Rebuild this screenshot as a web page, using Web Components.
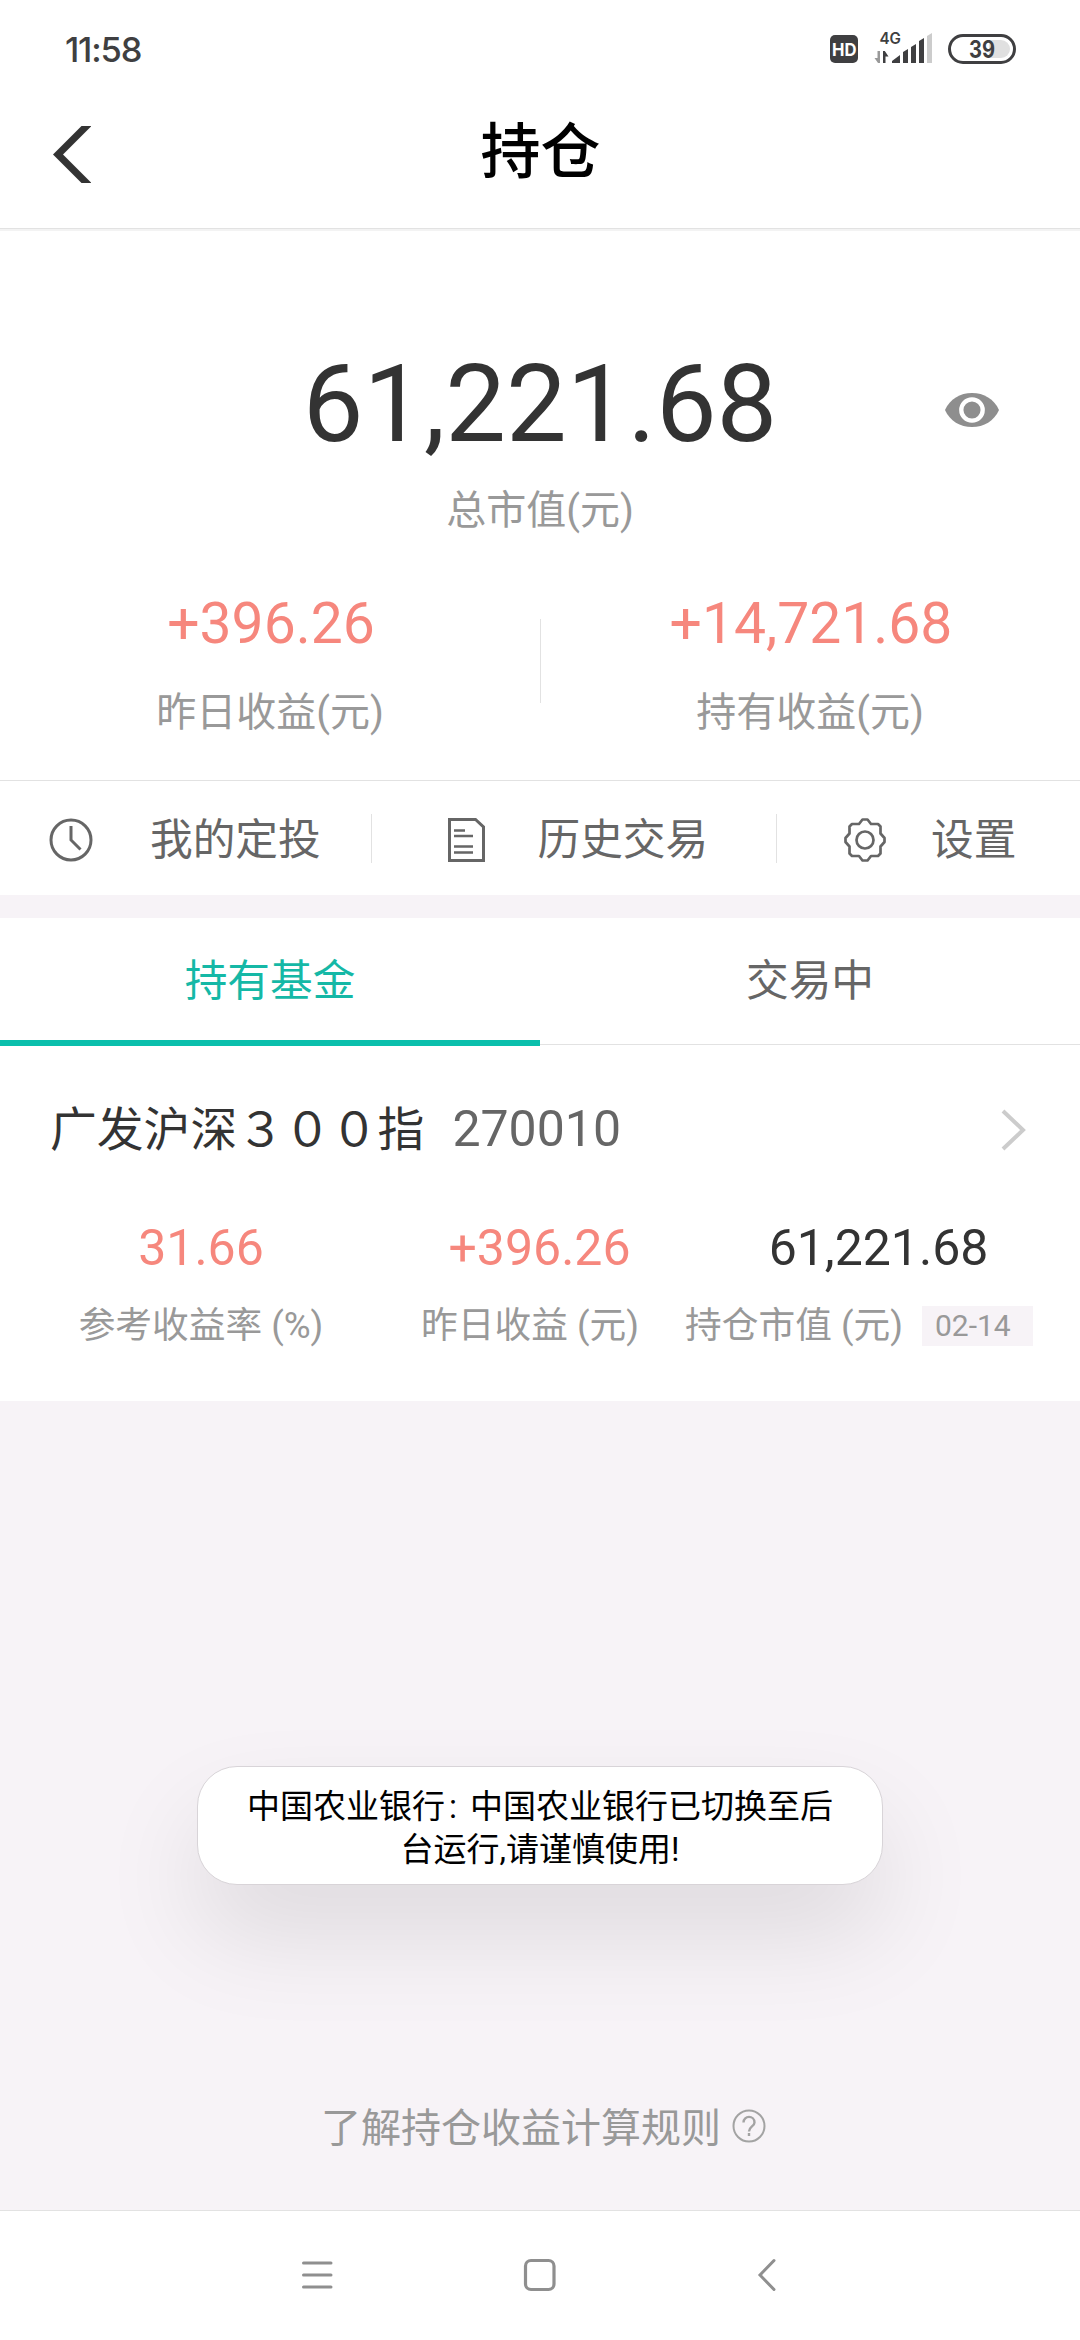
<!DOCTYPE html>
<html lang="zh-CN">
<head>
<meta charset="utf-8">
<title>持仓</title>
<style>
html,body{margin:0;padding:0}
body{width:1080px;height:2340px;overflow:hidden;background:#fff;font-family:Roboto,"Noto Sans CJK SC",sans-serif;color:#333}
</style>
</head>
<body>
<holdings-app></holdings-app>
<script>
const define = (name, css, html) => {
  const tpl = document.createElement('template');
  tpl.innerHTML = `<style>*{box-sizing:border-box}svg{display:block;flex:none}${css}</style>${html}`;
  customElements.define(name, class extends HTMLElement {
    constructor() {
      super();
      this.attachShadow({mode: 'open'}).append(tpl.content.cloneNode(true));
    }
  });
};

define('status-bar', `
:host{display:flex;height:90px;padding:0 64px 0 65px;justify-content:space-between;align-items:flex-start}
.time{font:500 34.5px/40px Inter,sans-serif;color:#3f3f41;margin-top:30px;letter-spacing:-1.2px}
.right{margin-top:30px}`,
`<div class="time">11:58</div>
<svg class="right" width="186" height="36" viewBox="830 30 186 36" font-family="Inter,sans-serif">
<rect x="830" y="35" width="28" height="28" rx="5" fill="#3f3f41"/>
<text x="832" y="55.8" font-size="18" font-weight="700" fill="#fff" textLength="24.5" lengthAdjust="spacingAndGlyphs">HD</text>
<text x="879.5" y="44" font-size="15.5" font-weight="600" fill="#3f3f41" textLength="21.5" lengthAdjust="spacingAndGlyphs">4G</text>
<path d="M880 51v12h-2l-3.500-5h3V51z" fill="#999"/>
<path d="M883 63V51h1.800l3.700 5.500h-3V63z" fill="#3f3f41"/>
<path d="M892 63v-2l8-6v8zM903 63V52l5-3v14zM911 63V47l5-3v19zM919 63V41l5-3v25z" fill="#3f3f41"/>
<path d="M927 63V36l5-3v30z" fill="#ccc"/>
<rect x="949.500" y="35.500" width="65" height="27" rx="13.500" fill="#fff" stroke="#3f3f41" stroke-width="3"/>
<path d="M989 40h12a9 9 0 0 1 0 18h-12z" fill="#e0e0e0"/>
<text x="969" y="57.800" font-size="24" font-weight="700" fill="#3f3f41" textLength="26" lengthAdjust="spacingAndGlyphs">39</text>
</svg>`);

define('title-bar', `
:host{display:flex;height:141px;padding:0 53px;align-items:flex-start;border-bottom:2px solid #f3f3f3;box-shadow:inset 0 -1px #e2e2e2}
svg{margin-top:36px}
h1{flex:1;margin:23px 37px 0 0;text-align:center;font:500 60px/80px Roboto,"Noto Sans CJK SC",sans-serif;color:#000}`,
`<svg width="38" height="57" viewBox="0 0 38 57"><path d="M28.500 0H38.500L10 28.500 38.500 57H28.500L0 28.500z" fill="#333"/></svg>
<h1><slot></slot></h1>`);

define('profit-cell', `
:host{display:block;width:540px;text-align:center}
.v{font-size:57px;line-height:66px;color:#f6877d;padding-left:2px}
.l{font-size:40px;line-height:48px;margin-top:32px;color:#999}`,
`<div class="v"><slot name="value"></slot></div><div class="l"><slot></slot></div>`);

define('market-summary', `
:host{display:flex;flex-direction:column;height:550px;padding-top:113px;border-bottom:1px solid #e2e2e2}
.total{display:grid;grid-template-columns:135px 1fr 135px;font-size:108px;line-height:120px;text-align:center}
.total b{grid-column:2;font-weight:400}
.total svg{margin-top:49px}
.cap{margin-top:23px;text-align:center;font-size:40px;line-height:48px;color:#999}
.row{display:flex;margin-top:56px}
.row i{width:1px;height:84px;margin:28px -1px 0 0;background:#e2e2e2}`,
`<div class="total"><b>61,221.68</b>
<svg width="54" height="34" viewBox="0 0 54 34"><path d="M0 17C5 6 15 0 27 0s22 6 27 17c-5 11-15 17-27 17S5 28 0 17z" fill="#8e8e8e"/><circle cx="27" cy="17" r="10.700" fill="none" stroke="#fff" stroke-width="4.300"/></svg></div>
<div class="cap">总市值(元)</div>
<div class="row"><profit-cell><span slot="value">+396.26</span>昨日收益(元)</profit-cell><i></i><profit-cell><span slot="value">+14,721.68</span>持有收益(元)</profit-cell></div>`);

define('quick-link', `
:host{display:flex;align-items:center;height:114px}
slot[name=icon]{display:flex}
::slotted(svg){margin-top:4px}
.t{font-size:42.7px;line-height:50px;color:#666;white-space:nowrap;margin-top:4px;margin-left:var(--gap)}`,
`<slot name="icon"></slot><div class="t"><slot></slot></div>`);

define('quick-links', `
:host{display:flex;align-items:center;height:114px}
i{width:1px;height:49px;background:#e2e2e2}
quick-link:nth-of-type(1){width:371px;padding-left:49px;--gap:57px}
quick-link:nth-of-type(2){width:404px;padding-left:76px;--gap:52.5px}
quick-link:nth-of-type(3){padding-left:66px;--gap:44px}`,
`<quick-link><svg slot="icon" width="44" height="44" viewBox="0 0 44 44" fill="none" stroke="#666" stroke-width="3"><circle cx="22" cy="22" r="20"/><path d="M22 8v14l9.500 9.500"/></svg>我的定投</quick-link><i></i>
<quick-link><svg slot="icon" width="37" height="44" viewBox="0 0 37 44" fill="none" stroke="#666" stroke-width="3"><path d="M1.500 1.500h26L35.500 9v33.500h-34z"/><path d="M6 12.500h11M6 18h19M6 28.500h19M6 34.500h19" stroke-width="2.600"/></svg>历史交易</quick-link><i></i>
<quick-link><svg slot="icon" width="44" height="44" viewBox="0 0 44 44" fill="none" stroke="#666" stroke-width="2.700" stroke-linejoin="round"><path d="M19.500 1.500h5L28 6h7l2.500 2.500v7l4 4.500v4l-4 4.500v7L35 38h-7l-3.500 4.500h-5L16 38H9l-2.500-2.500v-7l-4-4.500v-4l4-4.500v-7L9 6h7z"/><circle cx="22" cy="22" r="8.500"/></svg>设置</quick-link>`);

define('tab-item', `
:host{display:block;width:540px;height:127px;text-align:center;font-size:42.7px;line-height:126px;color:#666;border-bottom:1px solid #e2e2e2}
:host([active]){height:128px;color:#15b8a6;border-bottom:6px solid #0bbfac}`,
`<slot></slot>`);

define('fund-metric', `
:host{display:block;text-align:center}
.v{font-size:50px;line-height:60px;color:var(--value,#f6877d)}
.l{display:flex;justify-content:center;align-items:center;margin-top:24px;font-size:36.7px;line-height:48px;color:#999;white-space:nowrap}`,
`<div class="v"><slot name="value"></slot></div><div class="l"><slot></slot></div>`);

define('fund-card', `
:host{display:block;height:355px;padding-top:53px}
.head{display:flex;align-items:baseline;line-height:60px;padding-left:50px}
.name{font-size:46.8px}
.code{font-size:50px;color:#666;margin-left:28px}
.head svg{margin:0 54px 0 auto;align-self:center}
.metrics{display:flex;margin-top:57.5px}
fund-metric:nth-child(1){width:402px}
fund-metric:nth-child(2){width:275px}
fund-metric:nth-child(2) .lab{margin-right:19px}
fund-metric:nth-child(3){width:403px;--value:#333}
fund-metric:nth-child(3) .lab{margin-left:-39px}
em{font:400 30px/40px Roboto,sans-serif;width:111px;height:40px;background:#f7f3f7;color:#999;margin-left:19px;padding-left:13px;text-align:left}`,
`<div class="head"><span class="name">广发沪深３００指</span><span class="code">270010</span>
<svg width="25" height="42" viewBox="0 0 25 42"><path d="M2 2l20 19L2 40" fill="none" stroke="#ccc" stroke-width="4"/></svg></div>
<div class="metrics">
<fund-metric><span slot="value">31.66</span><span>参考收益率 (%)</span></fund-metric>
<fund-metric><span slot="value">+396.26</span><span class="lab">昨日收益 (元)</span></fund-metric>
<fund-metric><span slot="value">61,221.68</span><span class="lab">持仓市值 (元)</span><em>02-14</em></fund-metric>
</div>`);

define('rule-link', `
:host{display:flex;justify-content:center;align-items:center;padding-left:7px;font-size:40px;line-height:48px;color:#999}
svg{margin:-7px 0 0 11px}`,
`<span><slot></slot></span>
<svg width="34" height="34" viewBox="0 0 34 34" fill="none" stroke="#a3a3a3" stroke-width="2"><circle cx="17" cy="17" r="15.500"/><path d="M11.500 13.500c0-7.500 11-7.500 11 0 0 4-5.500 4-5.500 9M17 24v3" stroke-width="2.400"/></svg>`);

define('toast-message', `
:host{position:absolute;left:197px;top:1766px;width:686px;height:119px;padding:18px 0 0;border:1px solid #d8d4d8;border-radius:40px;background:#fff;text-align:center;font-family:Roboto,"Noto Sans CJK SC",sans-serif;font-size:33px;line-height:43px;color:#000;box-shadow:0 50px 100px rgba(0,0,0,.1)}
::slotted(div){white-space:pre}`,
`<slot></slot>`);

define('nav-bar', `
:host{display:flex;height:130px;border-top:1px solid #e2e2e2;background:#fff;padding:0 0 2px 301px;align-items:center}
svg+svg{margin-left:190px}
svg+svg+svg{margin-left:200px}`,
`<svg width="32" height="32" viewBox="0 0 32 32" stroke="#8f8f8f" stroke-width="3" stroke-linecap="round"><path d="M2.500 4h27.500M2.500 16h27.500M2.500 28h27.500"/></svg>
<svg width="34" height="34" viewBox="0 0 34 34"><rect x="2.500" y="2.500" width="28.500" height="29" rx="5.500" fill="none" stroke="#8f8f8f" stroke-width="3.200"/></svg>
<svg width="20" height="34" viewBox="0 0 20 34"><path d="M17 2.500L3 17l14 14.500" fill="none" stroke="#8f8f8f" stroke-width="3" stroke-linecap="round"/></svg>`);

define('holdings-app', `
:host{display:flex;flex-direction:column;width:1080px;height:2340px;position:relative;background:#fff}
.gap{height:23px;background:#f7f3f7}
.tabs{display:flex;height:128px}
.colon{letter-spacing:13px;margin-left:4px}
.rest{flex:1;display:flex;flex-direction:column;justify-content:flex-end;padding-bottom:57px;background:#f7f3f7}`,
`<status-bar></status-bar><title-bar>持仓</title-bar>
<market-summary></market-summary>
<quick-links></quick-links>
<div class="gap"></div>
<div class="tabs"><tab-item active>持有基金</tab-item><tab-item>交易中</tab-item></div>
<fund-card></fund-card>
<div class="rest"><rule-link>了解持仓收益计算规则</rule-link></div>
<nav-bar></nav-bar>
<toast-message><div>中国农业银行<span class="colon">:</span>中国农业银行已切换至后</div><div>台运行,请谨慎使用!</div></toast-message>`);
</script>
</body>
</html>
